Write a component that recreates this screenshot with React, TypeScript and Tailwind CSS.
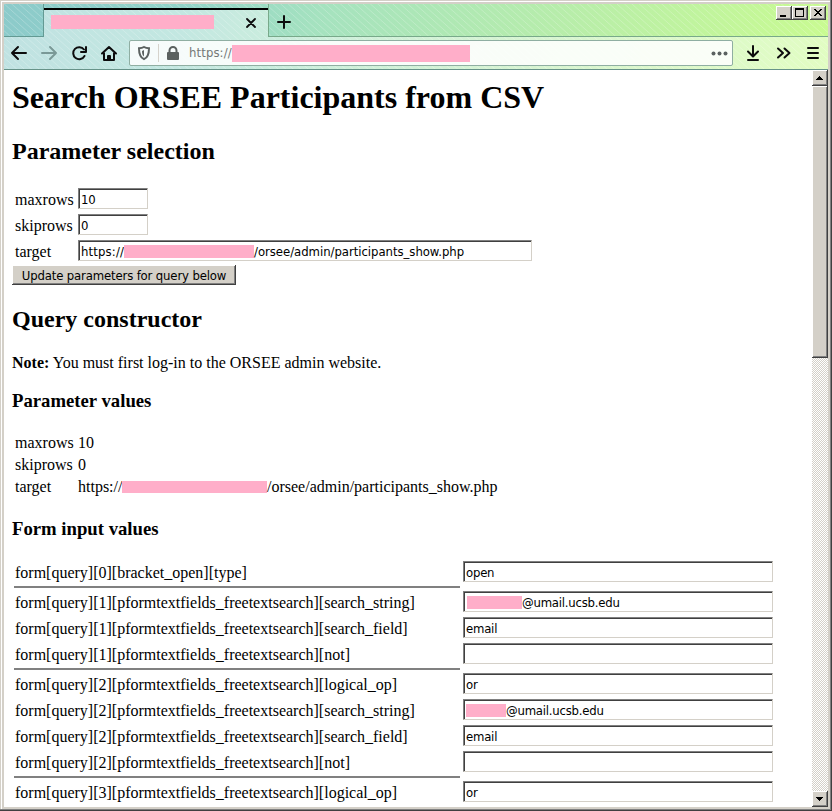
import React from "react";

const SANS = "font-['DejaVu_Sans_Condensed','DejaVu_Sans',sans-serif] [font-stretch:condensed]";

function Field({ value, redact, prefix, className, spacing = "tracking-[-0.1px]" }: { value: string; redact?: string; prefix?: string; className: string; spacing?: string }) {
  return (
    <div
      className={`${SANS} ${className} flex h-[21px] shrink-0 items-start border border-t-[#808080] border-l-[#808080] border-r-[#d4d0c8] border-b-[#d4d0c8] bg-white pt-px pl-[2px] text-[13px] leading-[19px] whitespace-pre shadow-[inset_1px_1px_#404040]`}
    >
      {prefix && <span className="w-[43px] tracking-[0.15px]">{prefix}</span>}
      {redact && <span className={`${redact} mt-[3px] h-[13px] shrink-0 bg-[#ffaec9]`} />}
      <span className={spacing}>{value}</span>
    </div>
  );
}

type RowData = { name: string; value: string; redact?: string; rule?: boolean };

const rows: RowData[] = [
  { name: "form[query][0][bracket_open][type]", value: "open", rule: true },
  { name: "form[query][1][pformtextfields_freetextsearch][search_string]", value: "@umail.ucsb.edu", redact: "w-[55px] ml-px" },
  { name: "form[query][1][pformtextfields_freetextsearch][search_field]", value: "email" },
  { name: "form[query][1][pformtextfields_freetextsearch][not]", value: "", rule: true },
  { name: "form[query][2][pformtextfields_freetextsearch][logical_op]", value: "or" },
  { name: "form[query][2][pformtextfields_freetextsearch][search_string]", value: "@umail.ucsb.edu", redact: "w-[40px]" },
  { name: "form[query][2][pformtextfields_freetextsearch][search_field]", value: "email" },
  { name: "form[query][2][pformtextfields_freetextsearch][not]", value: "", rule: true },
  { name: "form[query][3][pformtextfields_freetextsearch][logical_op]", value: "or" },
];

const RAISED =
  "bg-[#d4d0c8] shadow-[inset_-1px_-1px_#404040,inset_1px_1px_#ffffff,inset_-2px_-2px_#808080]";

function Caption({ children, className = "" }: { children: React.ReactNode; className?: string }) {
  return (
    <div className={`${RAISED} ${className} h-[14px] w-4`}>
      <svg width="16" height="14" shapeRendering="crispEdges">{children}</svg>
    </div>
  );
}

function Toolbar() {
  return (
    <div className="flex h-[33px] shrink-0 items-center border-b border-[#679389] bg-white/45">
      <svg width="125" height="32" viewBox="4 37 125 32" fill="none" stroke="#0c0c0d" strokeWidth="2" strokeLinecap="round" strokeLinejoin="round">
        <path d="M26 53H12M18 47l-6 6 6 6" />
        <path d="M42 53h14M50 47l6 6-6 6" stroke="#7a9997" />
        <path d="M84 49.5A6 6 0 1 0 84.5 56M86 47v5h-5" />
        <path d="M102 53.500l7-6.500 7 6.500M104 53v7h10v-7M108 60v-4h2v4" />
      </svg>
      <div className="flex h-[26px] w-[604px] items-center rounded-[2px] border border-[#8faea2] bg-white/85">
        <svg width="56" height="24" viewBox="130 41 56 24">
          <path d="M144 47c2 1.2 3.600 1.200 5 1.200 0 5-.5 9-5 11-4.500-2-5-6-5-11 1.400 0 3 0 5-1.200z" fill="none" stroke="#5b6160" strokeWidth="2" />
          <path d="M144 50v6.500c-1.700-1-2-3.500-2-5.500z" fill="#5b6160" />
          <path d="M158.500 44v18" stroke="#d6d3cc" />
          <rect x="167" y="52" width="12" height="8" rx="1" fill="#5b6160" />
          <path d="M169.500 53v-2.500a3.500 3.500 0 0 1 7 0V53" fill="none" stroke="#5b6160" strokeWidth="2" />
        </svg>
        <span className={`${SANS} ml-[3px] w-[43px] text-[13px] leading-[26px] tracking-[0.1px] text-[#747876]`}>https://</span>
        <span className="h-[17px] w-[238px] bg-[#ffaec9]" />
        <svg className="ml-auto mr-[4px]" width="17" height="5" fill="#5b6160">
          <circle cx="2.500" cy="2.500" r="2" /><circle cx="8.500" cy="2.500" r="2" /><circle cx="14.500" cy="2.500" r="2" />
        </svg>
      </div>
      <svg width="95" height="32" viewBox="733 37 95 32" fill="none" stroke="#0c0c0d" strokeWidth="2" strokeLinecap="round" strokeLinejoin="round">
        <path d="M753 46v10M748 51.500l5 5 5-5M748 60h10" />
        <path d="M778 48.500l5 4.500-5 4.500M784.500 48.500l5 4.500-5 4.500" />
        <path d="M808 48h10M808 53h10M808 58h10" />
      </svg>
    </div>
  );
}

export default function App() {
  return (
    <div className="h-[811px] w-[832px] overflow-hidden border-r border-b border-[#404040] bg-[#d4d0c8] font-['Liberation_Serif',serif] text-black">
      <div className="h-[810px] w-[831px] border-r border-b border-[#808080] pt-px pl-px">
        <div className="h-[808px] w-[829px] border-t border-l border-white pt-[2px] pl-[2px]">
          <div className="flex h-[803px] w-[824px] flex-col overflow-hidden bg-white">
            <div className="flex h-[66px] shrink-0 flex-col bg-[repeating-linear-gradient(42deg,transparent_0px,transparent_3.5px,#ffffff38_4.2px,transparent_5px),linear-gradient(100deg,#8ccaca_0%,#92d4c8_22%,#a5e2bf_38%,#b9eea8_70%,#c9fb91_100%)]">
              <div className="flex h-[33px] shrink-0">
                <div className="h-[33px] w-10 border-r border-b border-[#639a93]" />
                <div className="mt-[4px] flex h-[29px] w-[224px] items-center border-t-2 border-black bg-white/45 pl-[7px]">
                  <span className="mt-[-3px] h-[14px] w-[163px] bg-[#ffaec9]" />
                  <svg className="mt-[-1px] ml-[32px]" width="10" height="10" stroke="#0c0c0d" strokeWidth="1.800" strokeLinecap="round"><path d="M1 1l8 8M9 1l-8 8" /></svg>
                </div>
                <div className="flex h-[33px] flex-1 items-start border-b border-l border-[#78a98a]">
                  <svg className="mt-[11px] ml-[8px]" width="14" height="14" stroke="#0c0c0d" strokeWidth="2" strokeLinecap="round"><path d="M7 1v12M1 7h12" /></svg>
                  <div className="mt-[2px] mr-[2px] ml-auto flex">
                    <Caption><path d="M4 9h6v2H4z" /></Caption>
                    <Caption><path d="M3 2h9v9H3zM4 4v6h7V4z" fillRule="evenodd" /></Caption>
                    <Caption className="ml-[2px]"><path d="M4 3h2v1h1v1h2V4h1V3h2v1h-1v1h-1v1H9v1h1v1h1v1h1v1h-2V9H9V8H7v1H6v1H4V9h1V8h1V7h1V6H6V5H5V4H4z" /></Caption>
                  </div>
                </div>
              </div>
              <Toolbar />
            </div>

            <div className="flex h-[737px]">
              <main className="h-[737px] w-[808px] overflow-hidden pl-2 text-[16px]">
                <h1 className="h-[67px] pt-[9px] text-[32px] leading-[37px] font-bold whitespace-nowrap">Search ORSEE Participants from CSV</h1>
                <h2 className="h-[49px] text-[24px] leading-[28px] font-bold">Parameter selection</h2>
                <div className="flex h-[26px] pt-[2px] pl-[3px]"><span className="w-[63px] leading-[23px]">maxrows</span><Field value="10" className="w-[70px]" /></div>
                <div className="flex h-[26px] pt-[2px] pl-[3px]"><span className="w-[63px] leading-[23px]">skiprows</span><Field value="0" className="w-[70px]" /></div>
                <div className="flex h-[27px] pt-[2px] pl-[3px]"><span className="w-[63px] leading-[23px]">target</span><Field prefix="https://" redact="w-[130px]" value="/orsee/admin/participants_show.php" className="w-[454px]" spacing="tracking-[-0.04px]" /></div>
                <button className={`${RAISED} ${SANS} block h-5 w-[224px] text-[13px] leading-[21px] tracking-[-0.15px] whitespace-nowrap`}>Update parameters for query below</button>
                <h2 className="mt-[20px] h-[48px] text-[24px] leading-[28px] font-bold">Query constructor</h2>
                <p className="h-[37px] leading-5"><b>Note:</b> You must first log-in to the ORSEE admin website.</p>
                <h3 className="h-[42px] text-[18.720px] leading-[22px] font-bold">Parameter values</h3>
                <div className="flex h-[22px] pl-[3px] leading-[22px]"><span className="w-[63px]">maxrows</span>10</div>
                <div className="flex h-[22px] pl-[3px] leading-[22px]"><span className="w-[63px]">skiprows</span>0</div>
                <div className="flex h-[22px] items-center pl-[3px] leading-[22px]">
                  <span className="w-[63px]">target</span><span className="w-[44px]">https://</span>
                  <span className="h-3 w-[145px] bg-[#ffaec9]" />/orsee/admin/participants_show.php
                </div>
                <h3 className="mt-[20px] h-[41px] text-[18.720px] leading-[22px] font-bold">Form input values</h3>
                {rows.map((row) => (
                  <React.Fragment key={row.name}>
                    <div className="flex h-[26px] pt-[2px] pl-[3px]">
                      <span className="w-[448px] leading-[23px] whitespace-nowrap">{row.name}</span>
                      <Field value={row.value} redact={row.redact} className="w-[310px]" spacing="tracking-[-0.22px]" />
                    </div>
                    {row.rule && <div className="ml-[2px] h-1 w-[446px] pt-px"><div className="h-[2px] bg-[#808080]" /></div>}
                  </React.Fragment>
                ))}
              </main>
              <div className="flex h-[737px] w-4 flex-col bg-[#eae8e4] bg-[conic-gradient(#d4d0c8_25%,#ffffff_0_50%,#d4d0c8_0_75%,#ffffff_0)] bg-[length:2px_2px]">
                <div className={`${RAISED} h-4 w-4`}><svg width="16" height="16" shapeRendering="crispEdges"><path d="M7 6h1v1h1v1h1v1h1v1H4V9h1V8h1V7h1z" /></svg></div>
                <div className={`${RAISED} h-[272px] w-4`} />
                <div className={`${RAISED} mt-auto h-4 w-4`}><svg width="16" height="16" shapeRendering="crispEdges"><path d="M4 6h7v1h-1v1H9v1H8v1H7V9H6V8H5V7H4z" /></svg></div>
              </div>
            </div>
          </div>
        </div>
      </div>
    </div>
  );
}
